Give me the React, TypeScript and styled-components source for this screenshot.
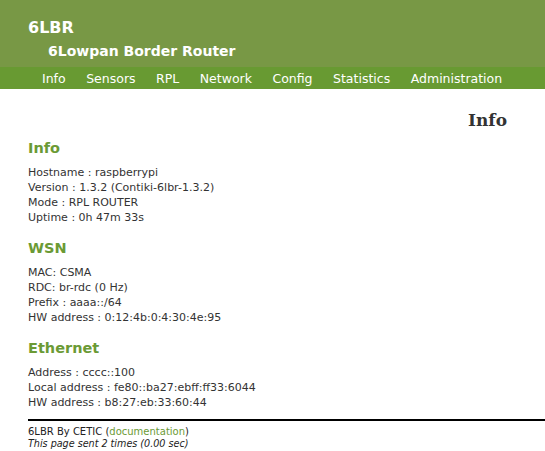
import React from "react";
import styled, { createGlobalStyle } from "styled-components";

const Global = createGlobalStyle`
  html, body { margin: 0; padding: 0; background: #fff; }
  body { font-family: "DejaVu Sans", Verdana, sans-serif; color: #333; }
`;

const Header = styled.header`
  background: #789845;
  height: 67px;
  padding: 0 0 0 28px;
  box-sizing: border-box;
  display: flex;
  flex-direction: column;
`;

const Title = styled.div`
  color: #fff;
  font-weight: bold;
  font-size: 16px;
  line-height: 18px;
  margin-top: 19px;
`;

const Subtitle = styled.div`
  color: #fff;
  font-weight: bold;
  font-size: 14px;
  line-height: 18px;
  margin-top: 5px;
  padding-left: 20px;
`;

const Nav = styled.nav`
  background: #689a32;
  height: 22px;
  display: flex;
  align-items: center;
  padding-left: 42px;
`;

const NavItem = styled.a`
  color: #fff;
  font-size: 12.5px;
  text-decoration: none;
  margin-right: 20.5px;
`;

const Main = styled.main`
  padding: 0 38px 0 28px;
`;

const PageTitle = styled.h1`
  margin: 20px 0 0;
  text-align: right;
  font-family: "DejaVu Serif", Georgia, serif;
  font-size: 17px;
  line-height: 22px;
  color: #333;
`;

const SectionTitle = styled.h2<{ $first?: boolean }>`
  margin: ${(p) => (p.$first ? "7px" : "13px")} 0 0;
  color: #6b9a35;
  font-size: 14.5px;
  line-height: 20px;
  font-weight: bold;
`;

const Lines = styled.div`
  margin-top: 7px;
  font-size: 11px;
  line-height: 15px;
`;

const Rule = styled.hr`
  margin: 9px 0 0 28px;
  border: none;
  border-top: 2px solid #000;
  height: 0;
`;

const Footer = styled.footer`
  padding: 5px 28px 0;
  font-size: 10px;
  line-height: 12px;
  color: #222;
`;

const DocLink = styled.a`
  color: #6b9a35;
  text-decoration: none;
`;

const Note = styled.div`
  font-style: italic;
  font-size: 9.6px;
`;

const nav = ["Info", "Sensors", "RPL", "Network", "Config", "Statistics", "Administration"];

const sections: { title: string; lines: string[] }[] = [
  {
    title: "Info",
    lines: [
      "Hostname : raspberrypi",
      "Version : 1.3.2 (Contiki-6lbr-1.3.2)",
      "Mode : RPL ROUTER",
      "Uptime : 0h 47m 33s",
    ],
  },
  {
    title: "WSN",
    lines: ["MAC: CSMA", "RDC: br-rdc (0 Hz)", "Prefix : aaaa::/64", "HW address : 0:12:4b:0:4:30:4e:95"],
  },
  {
    title: "Ethernet",
    lines: ["Address : cccc::100", "Local address : fe80::ba27:ebff:ff33:6044", "HW address : b8:27:eb:33:60:44"],
  },
];

export default function App() {
  return (
    <>
      <Global />
      <Header>
        <Title>6LBR</Title>
        <Subtitle>6Lowpan Border Router</Subtitle>
      </Header>
      <Nav>
        {nav.map((n) => (
          <NavItem key={n} href="#">
            {n}
          </NavItem>
        ))}
      </Nav>
      <Main>
        <PageTitle>Info</PageTitle>
        {sections.map((s, i) => (
          <section key={s.title}>
            <SectionTitle $first={i === 0}>{s.title}</SectionTitle>
            <Lines>
              {s.lines.map((l) => (
                <div key={l}>{l}</div>
              ))}
            </Lines>
          </section>
        ))}
      </Main>
      <Rule />
      <Footer>
        <div>
          6LBR By CETIC (<DocLink href="#">documentation</DocLink>)
        </div>
        <Note>This page sent 2 times (0.00 sec)</Note>
      </Footer>
    </>
  );
}
